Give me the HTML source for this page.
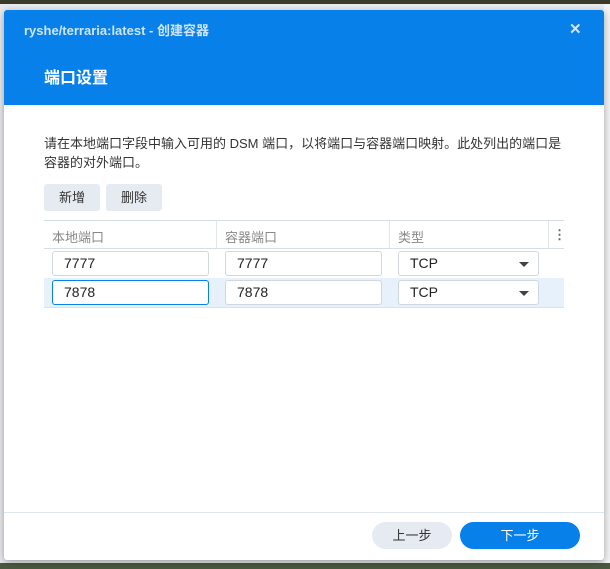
<!DOCTYPE html>
<html><head><meta charset="utf-8"><style>
*{box-sizing:border-box;margin:0;padding:0}
body{width:610px;height:569px;overflow:hidden;background:#e9ebee;position:relative;font-family:"Liberation Sans","Noto Sans CJK SC",sans-serif}
.top{position:absolute;left:0;top:0;width:610px;height:4px;background:#3a3a2a}
.bot{position:absolute;left:0;top:563px;width:610px;height:6px;background:#4a5a40}
.bgr{position:absolute;left:604px;top:4px;width:6px;height:559px;background:#f3f4f6}
.dlg{position:absolute;left:4px;top:10px;width:600px;height:550px;background:#fff;border-radius:3px;box-shadow:0 2px 8px rgba(0,0,0,.35);overflow:hidden}
.hd{height:95px;background:#0780ea;position:relative}
.t1{position:absolute;left:20px;top:10px;font-size:13px;font-weight:bold;color:#cfe4fb}
.x{position:absolute;left:565px;top:10px;font-size:15px;color:#cfe4fb;font-weight:bold}
.t2{position:absolute;left:40px;top:54px;font-size:16px;font-weight:bold;color:#fff}
.abs{position:absolute}
.desc{left:40px;top:124px;width:525px;font-size:13px;line-height:19px;color:#333}
.btn{top:174px;width:56px;height:27px;background:#e6ebf2;border-radius:3px;font-size:13px;color:#333;text-align:center;line-height:27px}
.tbl{left:40px;top:210px;width:520px;height:29px;border-top:1px solid #d5dde6;border-bottom:1px solid #d5dde6;font-size:13px;color:#888}
.tbl span{position:absolute;top:6px}
.dv{position:absolute;top:0;width:1px;height:28px;background:#e2e7ee}
.row2{left:40px;top:268px;width:520px;height:30px;background:#e6f1fc;border-bottom:1px solid #d5e3f0}
.in{height:25px;border:1px solid #d0d7e0;border-radius:3px;background:#fff;font-size:14px;color:#222;padding-left:11px;line-height:23px}
.in.f{border-color:#0780ea}
.car{position:absolute;right:9px;top:10px;border-left:5px solid transparent;border-right:5px solid transparent;border-top:5px solid #444}
.ft{left:0;top:502px;width:600px;height:1px;background:#dde5ee}
.pb{top:512px;height:27px;border-radius:14px;font-size:13px;text-align:center;line-height:27px}
</style></head><body>
<div class="top"></div><div class="bgr"></div><div class="bot"></div>
<div class="dlg">
<div class="hd"><div class="t1">ryshe/terraria:latest - 创建容器</div><div class="x">✕</div><div class="t2">端口设置</div></div>
<div class="abs desc">请在本地端口字段中输入可用的 DSM 端口，以将端口与容器端口映射。此处列出的端口是容器的对外端口。</div>
<div class="abs btn" style="left:40px">新增</div>
<div class="abs btn" style="left:102px">删除</div>
<div class="abs tbl"><span style="left:8px">本地端口</span><div class="dv" style="left:172px"></div><span style="left:181px">容器端口</span><div class="dv" style="left:345px"></div><span style="left:354px">类型</span><div class="dv" style="left:504px"></div><span style="left:509px;color:#666;font-weight:bold">⋮</span></div>
<div class="abs row2"></div>
<div class="abs in" style="left:48px;top:241px;width:157px">7777</div>
<div class="abs in" style="left:221px;top:241px;width:157px">7777</div>
<div class="abs in" style="left:394px;top:241px;width:141px">TCP<div class="car"></div></div>
<div class="abs in f" style="left:48px;top:270px;width:157px">7878</div>
<div class="abs in" style="left:221px;top:270px;width:157px">7878</div>
<div class="abs in" style="left:394px;top:270px;width:141px">TCP<div class="car"></div></div>
<div class="abs ft"></div>
<div class="abs pb" style="left:368px;width:80px;background:#e6ebf2;color:#333">上一步</div>
<div class="abs pb" style="left:456px;width:120px;background:#0780ea;color:#fff">下一步</div>
</div>
</body></html>
